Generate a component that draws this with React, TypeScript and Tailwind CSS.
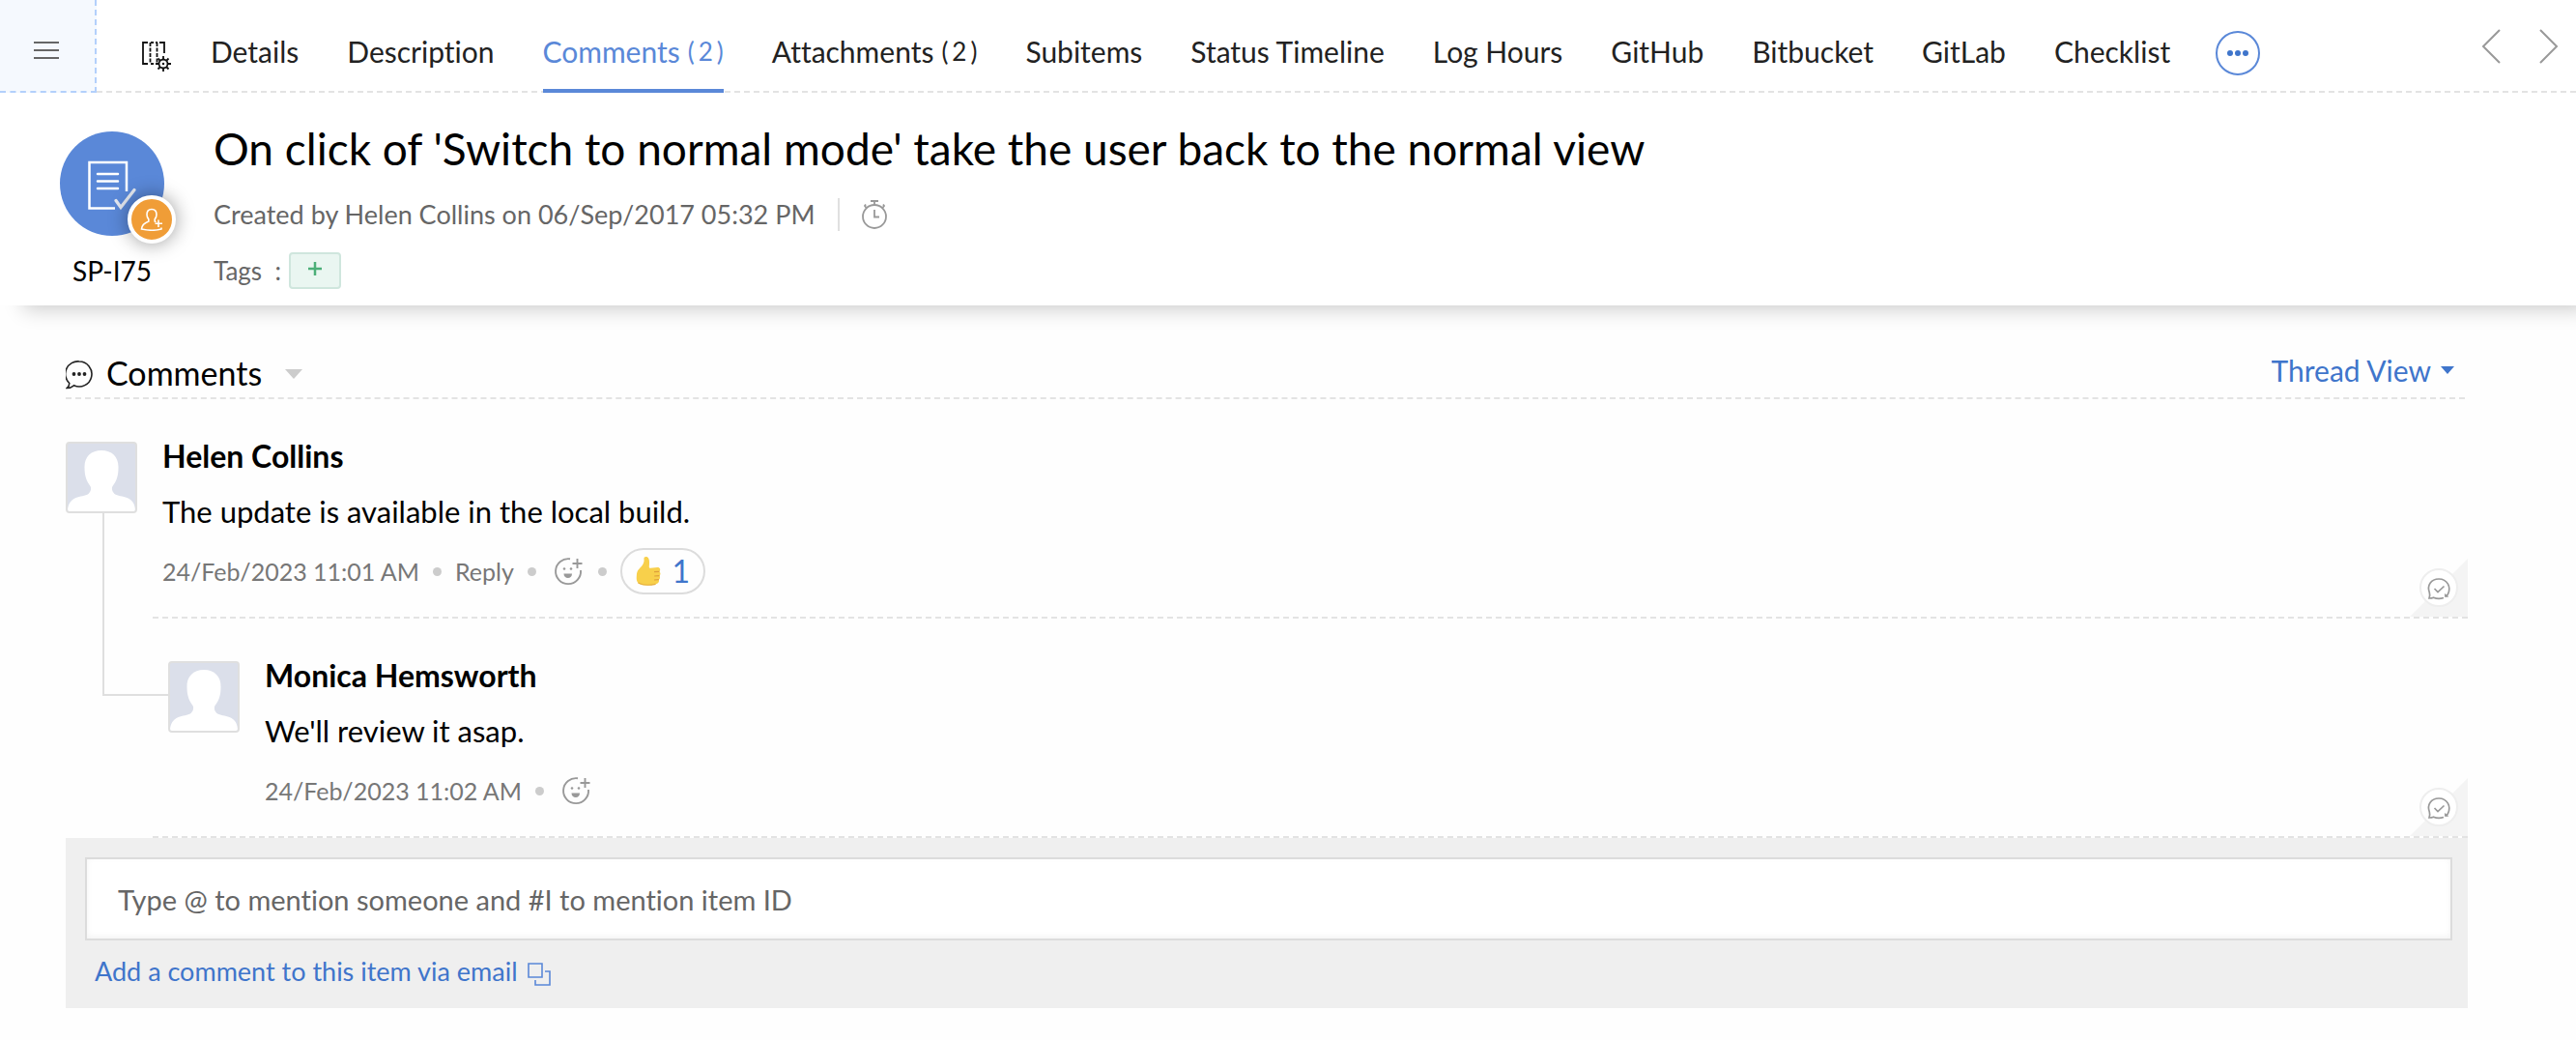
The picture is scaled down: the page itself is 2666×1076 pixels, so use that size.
import React, { useState } from 'react';
import clsx from 'clsx';

interface Tab {
  label: string;
  count?: number;
}

interface CommentType {
  id: number;
  author: string;
  text: string;
  date: string;
  isReply?: boolean;
  likes?: number;
}

const tabs: Tab[] = [
  { label: 'Details' },
  { label: 'Description' },
  { label: 'Comments', count: 2 },
  { label: 'Attachments', count: 2 },
  { label: 'Subitems' },
  { label: 'Status Timeline' },
  { label: 'Log Hours' },
  { label: 'GitHub' },
  { label: 'Bitbucket' },
  { label: 'GitLab' },
  { label: 'Checklist' },
];

const comments: CommentType[] = [
  {
    id: 1,
    author: 'Helen Collins',
    text: 'The update is available in the local build.',
    date: '24/Feb/2023 11:01 AM',
    likes: 1,
  },
  {
    id: 2,
    author: 'Monica Hemsworth',
    text: "We'll review it asap.",
    date: '24/Feb/2023 11:02 AM',
    isReply: true,
  },
];

function LayoutSettingsIcon() {
  return (
    <svg width="32" height="32" viewBox="0 0 32 32" fill="none" stroke="#111" strokeWidth="1.800">
      <path d="M7 1H2v22h5M19 1h5v11" />
      <path d="M9.500 1v22M16.500 1v22" strokeDasharray="4 1.500" />
      <path d="M10 1h7M10 23h5" strokeDasharray="3 2" />
      <circle cx="23" cy="23" r="4.500" />
      <path d="M23 18v-3M23 31v-3M18 23h-3M31 23h-3M19.500 19.500l-2-2M28.500 28.500l-2-2M19.500 26.500l-2 2M28.500 17.500l-2 2" />
      <circle cx="23" cy="23" r="1.200" fill="#111" stroke="none" />
    </svg>
  );
}

function ItemIcon() {
  return (
    <svg width="50" height="52" viewBox="0 0 50 52" fill="none" stroke="#fff" strokeWidth="2.500">
      <path d="M40 32V2H1.500v47.500H28" />
      <path d="M10 14h21M10 21.500h21M10 29h21" strokeLinecap="round" />
      <path d="M29 41.500l5 7 14-18" stroke="#e4e8f0" strokeWidth="3.200" strokeLinecap="round" />
    </svg>
  );
}

function AddOwnerIcon() {
  return (
    <svg width="24" height="24" viewBox="0 0 24 24" fill="none" stroke="#fff" strokeWidth="1.600">
      <path d="M16.500 14.800l-1.300-.7v-2.200c1.200-1.200 1.800-2.700 1.800-4.800C17 3.500 15 1.500 12 1.500S7 3.500 7 7.100c0 2.100.7 3.600 1.800 4.800v2.200c-4.300 1.700-7 3.500-7.300 7.900 6 1.300 15 1.500 20.500 0v-1.500" />
      <path d="M19 12.500v7.500M15.500 16.300H23" />
    </svg>
  );
}

function StopwatchIcon() {
  return (
    <svg width="28" height="32" viewBox="0 0 28 32" fill="none" stroke="#999" strokeWidth="1.800">
      <circle cx="14" cy="18" r="12" />
      <path d="M14 6V2M10 2h8M14 11v7.500h5M5.500 9L4 7l1-1.500M22.500 9L24 7l-1-1.500" />
    </svg>
  );
}

function BubbleIcon() {
  return (
    <svg width="28" height="30" viewBox="0 0 28 30" fill="none" stroke="#222" strokeWidth="1.600">
      <path d="M14 1a13 13 0 1 1-5.500 24.800C6.500 27.500 4 28.500 1.200 28.500c1.600-1.300 2.600-3 2.600-5A13 13 0 0 1 14 1z" />
      <g fill="#222" stroke="none">
        <circle cx="8.500" cy="14" r="1.900" />
        <circle cx="14" cy="14" r="1.900" />
        <circle cx="19.500" cy="14" r="1.900" />
      </g>
    </svg>
  );
}

function AddReactionIcon() {
  return (
    <svg width="30" height="30" viewBox="0 0 30 30" fill="none" stroke="#999" strokeWidth="1.900">
      <path d="M17 2.300A13 13 0 1 0 28 14" />
      <path d="M24.500 2v10M19.500 7h10" />
      <g fill="#999" stroke="none">
        <circle cx="11" cy="12.500" r="1.300" />
        <circle cx="18" cy="12.500" r="1.300" />
        <path d="M10.500 17.500h8.500c0 2.800-1.700 4.500-4.200 4.500s-4.300-1.700-4.300-4.500z" />
      </g>
    </svg>
  );
}

function ThumbIcon() {
  return (
    <svg width="26" height="32" viewBox="0 0 26 32">
      <path
        d="M8.500 3C8 .8 11.500 0 13 2.200c1.500 2.300 1 6 .8 9.300 0 1 .6 1.200 1.400 1.200l7.300-.6c2.700 0 3.500 2.700 1.900 4.300 1.500 1.300 1.300 3.200.1 4.300 1 1.400.7 3.100-.6 4 .6 2.600-.8 3.900-3.300 4.600-5.600 1.600-12.600 1.600-16.600 0C.8 27.700.5 24.500.9 20c.3-4.500 2.100-6 4.300-8.300C7.900 8.900 8.900 6.500 8.500 3z"
        fill="#f8d04b"
      />
      <path d="M19 16.600l5.400-.2M19.200 21l5.300-.3M19 25l4.900-.3" stroke="#dd9f3a" strokeWidth="1.200" fill="none" />
      <path d="M2.500 28c4 2.300 12 2.600 18.100 1.300" stroke="#e5ad3c" strokeWidth="1.200" fill="none" />
    </svg>
  );
}

function CopyIcon() {
  return (
    <svg width="24" height="24" viewBox="0 0 24 24" fill="none" stroke="#5a88d8" strokeWidth="1.600">
      <path d="M1 1h14v14H1z" />
      <path d="M18 9h5v14H8v-5" />
    </svg>
  );
}

function Avatar() {
  return (
    <div className="h-[74px] w-[74px] shrink-0 overflow-hidden rounded-[4px] border-2 border-[#dfdfdf] bg-[#dbdfea]">
      <svg className="h-full w-full" viewBox="0 0 70 70" fill="#fff">
        <path d="M35 7c11 0 18 7 17.500 18 0 8-2 14-6 19-1.500 3 0 6 2 8 3 2 9 2.500 13 4 6 2.500 8.500 7 8.500 14H0c0-7 3-11.500 8.500-14 4-1.500 10-2 13-4 2-2 3.500-5 2-8-4-5-6-11-6-19C17 14 24 7 35 7z" />
      </svg>
    </div>
  );
}

function Dot() {
  return <span className="h-[9px] w-[9px] shrink-0 rounded-full bg-[#ccc]" />;
}

// Folded corner with the resolve action
function ResolveCorner() {
  return (
    <button aria-label="Resolve" className="absolute right-0 bottom-0">
      <svg width="60" height="60" viewBox="0 0 60 60" fill="none">
        <path d="M60 0v60H0z" fill="#f4f4f4" />
        <circle cx="30" cy="30" r="19" fill="#fff" stroke="#eee" strokeWidth="2" />
        <g stroke="#999" strokeWidth="1.700">
          <path d="M35 40.500c-3.500 1.200-7 1.200-10.500-.3-1.500.7-3 .8-4.500.8.700-2 1-3.800.3-6C17.500 27.500 22 21 30 21c9 0 13 8.500 9.500 15.500l-2 3" />
          <path d="M25.500 31l3.500 3.500 6.500-6" />
        </g>
        <path d="M36 36l4.500 3.500-4.500.3z" fill="#999" />
      </svg>
    </button>
  );
}

function Comment({ comment, last }: { comment: CommentType; last: boolean }) {
  const { author, text, date, isReply, likes } = comment;

  return (
    <li className="flex">
      <div className={clsx('flex w-[90px] shrink-0 flex-col', isReply ? 'pl-[38px]' : 'pt-11')}>
        {isReply ? (
          <div className="h-20 border-b-2 border-l-2 border-[#dfdfdf]" />
        ) : (
          <>
            <Avatar />
            {!last && <div className="ml-[38px] w-0.5 flex-1 bg-[#dfdfdf]" />}
          </>
        )}
      </div>

      <div className="relative flex flex-1 border-b-2 border-dashed border-[#e3e3e3]">
        {isReply && (
          <>
            <div className="h-20 w-4 border-b-2 border-[#dfdfdf]" />
            <div className="pt-11 pr-4">
              <Avatar />
            </div>
          </>
        )}
        <div className="flex-1 pt-[39px] pb-[23px] pl-[10px]">
          <h3 className="text-[32px] leading-10 font-bold">{author}</h3>
          <p className="mt-[17px] text-[31px] leading-10">{text}</p>
          <div className="mt-[18px] flex h-12 items-center text-[25px] leading-8 text-[#777]">
            <time className="mr-[14px]">{date}</time>
            <Dot />
            {!isReply && (
              <>
                <button className="mx-[14px]">Reply</button>
                <Dot />
              </>
            )}
            <button aria-label="Add reaction" className="mr-4 ml-[18px]">
              <AddReactionIcon />
            </button>
            {likes && (
              <>
                <Dot />
                <button className="ml-[14px] flex h-12 w-[88px] items-center justify-center gap-3 rounded-full border-2 border-[#dcdcdc] text-[32px] text-[#3f75cb]">
                  <ThumbIcon />
                  {likes}
                </button>
              </>
            )}
          </div>
        </div>
        <ResolveCorner />
      </div>
    </li>
  );
}

function TabBar() {
  const [active, setActive] = useState('Comments');

  return (
    <div className="flex h-24">
      <button
        aria-label="Menu"
        className="flex w-[100px] shrink-0 items-center justify-center border-r-2 border-b-2 border-dashed border-[#b3d0fb] bg-[#f5f9fe] pt-[10px] pr-0.5"
      >
        <svg width="26" height="20" viewBox="0 0 26 20" stroke="#666" strokeWidth="2">
          <path d="M0 2h26M0 10h26M0 18h26" />
        </svg>
      </button>
      <div className="flex flex-1 border-b-2 border-dashed border-[#e3e3e3] pl-[46px]">
        <button aria-label="Customize layout" className="mr-10 pt-6">
          <LayoutSettingsIcon />
        </button>
        <nav className="-mb-0.5 flex gap-[50px]">
          {tabs.map((tab) => (
            <a
              key={tab.label}
              href="#"
              onClick={() => setActive(tab.label)}
              className={clsx(
                'flex items-center gap-2 border-b-4 pt-[14px] text-[30px] leading-9 whitespace-nowrap',
                active === tab.label ? 'border-[#5a88d8] text-[#5a88d8]' : 'border-transparent text-[#222]'
              )}
            >
              {tab.label}
              {tab.count && (
                <span className="flex gap-1 text-[26px]">
                  <span>(</span>
                  <span>{tab.count}</span>
                  <span>)</span>
                </span>
              )}
            </a>
          ))}
        </nav>
        <button aria-label="More tabs" className="ml-[46px] pt-4">
          <svg width="48" height="48" viewBox="0 0 48 48">
            <circle cx="24" cy="24" r="22" fill="none" stroke="#5a88d8" strokeWidth="2" />
            <g fill="#3f75cb">
              <circle cx="16" cy="24" r="3" />
              <circle cx="24" cy="24" r="3" />
              <circle cx="32" cy="24" r="3" />
            </g>
          </svg>
        </button>
        <div className="ml-auto flex gap-10 pt-0.5 pr-[18px]">
          <button aria-label="Previous item">
            <svg width="20" height="36" viewBox="0 0 20 36" fill="none" stroke="#999" strokeWidth="2">
              <path d="M19 1L2 18l17 17" />
            </svg>
          </button>
          <button aria-label="Next item">
            <svg width="20" height="36" viewBox="0 0 20 36" fill="none" stroke="#999" strokeWidth="2">
              <path d="M1 1l17 17L1 35" />
            </svg>
          </button>
        </div>
      </div>
    </div>
  );
}

function ItemHeader() {
  return (
    <div className="flex h-[220px] pl-[62px]">
      <div className="flex w-[108px] shrink-0 flex-col items-center pt-10">
        <div className="relative flex h-[108px] w-[108px] items-center justify-center rounded-full bg-[#5a88d8] pt-1">
          <ItemIcon />
          <button
            aria-label="Add owner"
            className="absolute -right-3 -bottom-2 flex h-[50px] w-[50px] items-center justify-center rounded-full border-4 border-white bg-[#f09d37] shadow-[0_0_20px_rgba(0,0,0,0.4)]"
          >
            <AddOwnerIcon />
          </button>
        </div>
        <span className="mt-5 text-[28px] leading-8">SP-I75</span>
      </div>
      <div className="pl-[51px] pt-7">
        <h1 className="text-[46px] leading-[60px]">
          On click of 'Switch to normal mode' take the user back to the normal view
        </h1>
        <div className="mt-5 flex items-center text-[27px] leading-9 text-[#666]">
          <p>Created by Helen Collins on 06/Sep/2017 05:32 PM</p>
          <span className="ml-6 h-[34px] w-0.5 bg-[#e0e0e0]" />
          <button aria-label="Timer" className="ml-[22px]">
            <StopwatchIcon />
          </button>
        </div>
        <div className="mt-[21px] flex items-center text-[26px] leading-[38px] text-[#666]">
          <span>Tags&nbsp; :</span>
          <button
            aria-label="Add tag"
            className="ml-2 flex h-[38px] w-[54px] items-center justify-center rounded-[4px] border-2 border-[#cfe6dd] bg-[#eaf6f1]"
          >
            <svg className="mb-1" width="14" height="14" viewBox="0 0 14 14" stroke="#4caf78" strokeWidth="2.500">
              <path d="M7 0v14M0 7h14" />
            </svg>
          </button>
        </div>
      </div>
    </div>
  );
}

export default function App() {
  const [draft, setDraft] = useState('');

  return (
    <div className="min-h-screen overflow-x-clip bg-[#fefefe] font-['Lato',sans-serif] text-black [font-variant-ligatures:none]">
      <header className="bg-white shadow-[18px_10px_20px_-6px_rgba(0,0,0,0.2)]">
        <TabBar />
        <ItemHeader />
      </header>

      <main className="pt-11 pr-28 pb-8 pl-[68px]">
        <div className="mr-[3px] flex h-[53px] items-start border-b-2 border-dashed border-[#e3e3e3]">
          <span className="pt-[13px]">
            <BubbleIcon />
          </span>
          <h2 className="ml-[14px] text-[34px] leading-[52px]">Comments</h2>
          <button aria-label="Comment options" className="mt-[22px] ml-6">
            <svg width="18" height="10" viewBox="0 0 18 10" fill="#ccc">
              <path d="M0 0h18L9 10z" />
            </svg>
          </button>
          <label className="ml-auto flex items-center gap-[10px] pr-[11px] text-[#3f75cb]">
            <select
              aria-label="View"
              className="field-sizing-content appearance-none bg-transparent text-[30px] leading-[46px]"
            >
              <option>Thread View</option>
              <option>Flat View</option>
            </select>
            <svg width="14" height="8" viewBox="0 0 14 8" fill="#3f75cb">
              <path d="M0 0h14L7 8z" />
            </svg>
          </label>
        </div>

        <ul>
          {comments.map((comment, i) => (
            <Comment key={comment.id} comment={comment} last={i === comments.length - 1} />
          ))}
        </ul>

        <form className="bg-[#efefef] pt-5 pr-4 pb-5 pl-5">
          <input
            type="text"
            aria-label="Comment"
            placeholder="Type @ to mention someone and #I to mention item ID"
            value={draft}
            onChange={(e) => setDraft(e.target.value)}
            className="h-[86px] w-full border-2 border-[#dcdcdc] bg-white px-8 text-[29px] shadow-[inset_0_-2px_6px_rgba(0,0,0,0.05)] placeholder:text-[#666]"
          />
          <a href="#" className="mt-[14px] ml-[10px] flex items-center gap-[10px] text-[27px] leading-9 text-[#3f75cb]">
            Add a comment to this item via email
            <span className="pt-1.5">
              <CopyIcon />
            </span>
          </a>
        </form>
      </main>
    </div>
  );
}
